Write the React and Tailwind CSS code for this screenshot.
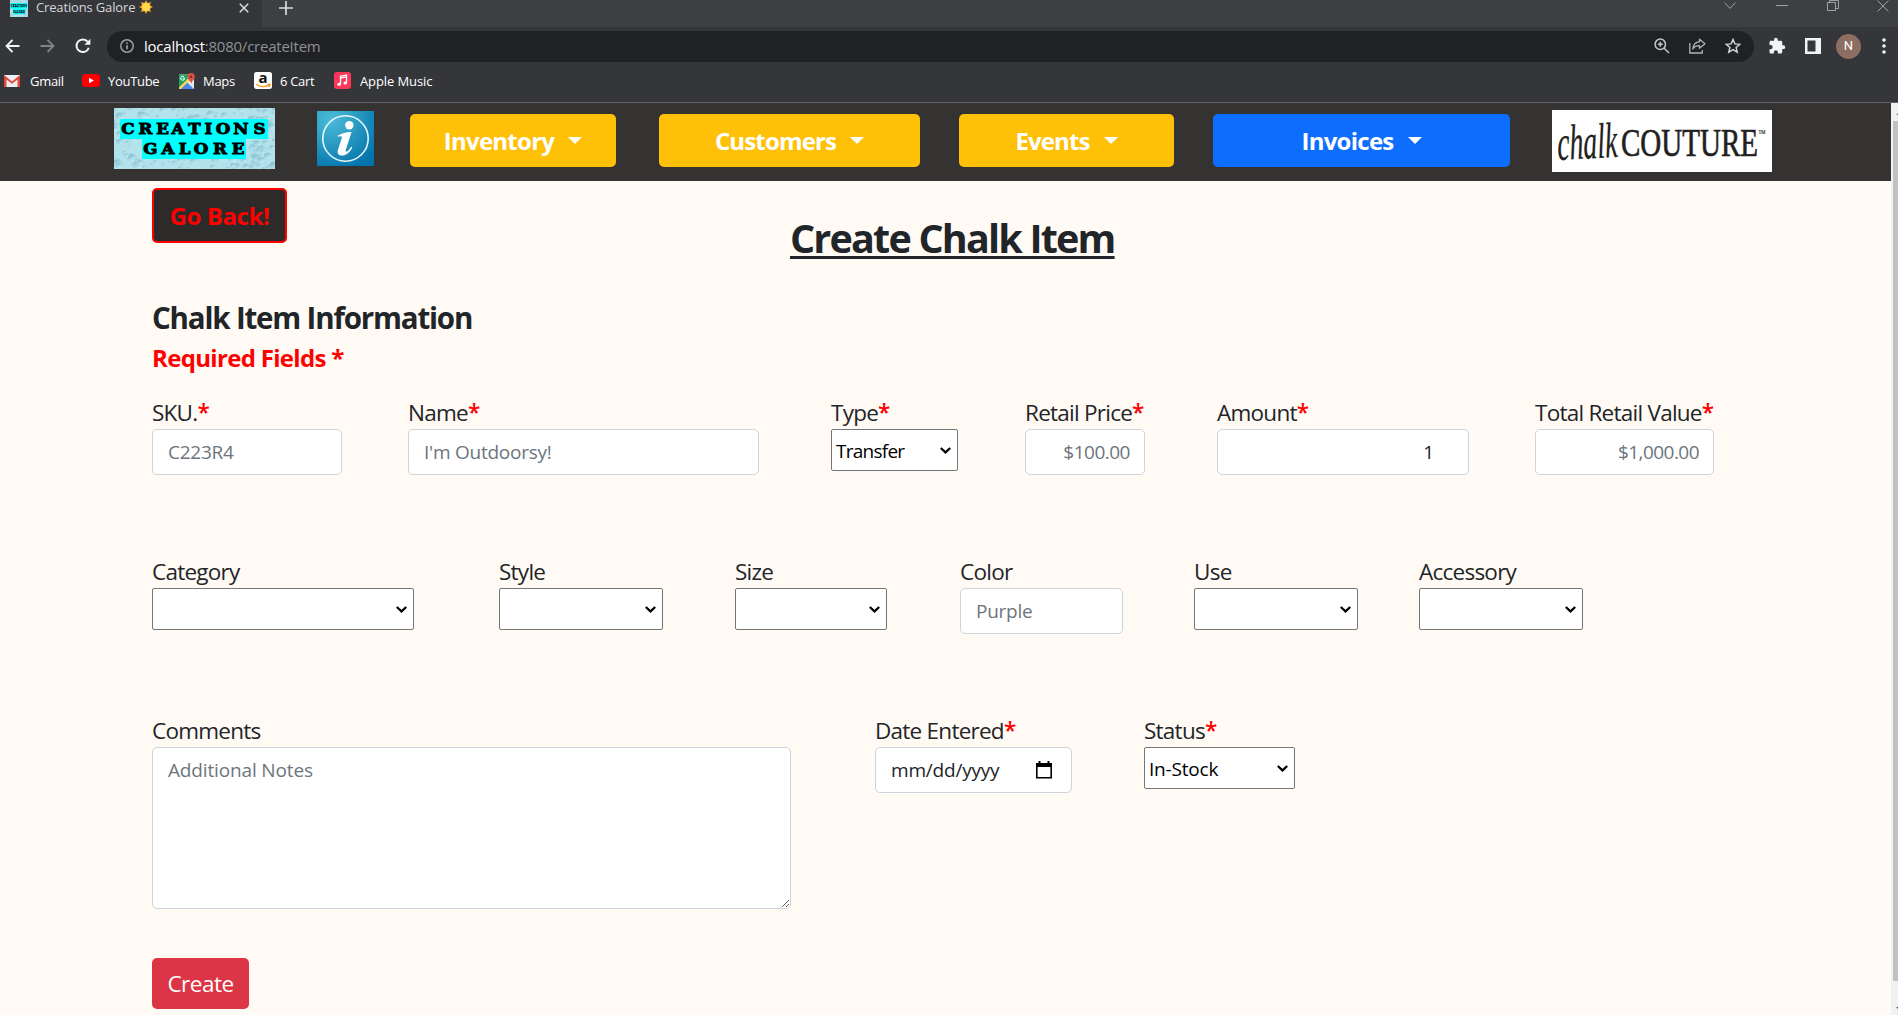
import React from "react";

/* ---------- browser chrome ---------- */

function BrandDrops({ idPrefix }) {
  const drops = [];
  let seed = 7;
  const rnd = () => {
    seed = (seed * 16807) % 2147483647;
    return seed / 2147483647;
  };
  for (let i = 0; i < 260; i++) {
    const r = 1 + rnd() * rnd() * 5.5;
    drops.push({ x: rnd() * 161, y: rnd() * 61, r });
  }
  return (
    <g>
      <defs>
        <linearGradient id={idPrefix + "d"} x1="0" y1="0" x2="0.6" y2="1">
          <stop offset="0" stopColor="#74b2c6" />
          <stop offset="1" stopColor="#caf0f6" />
        </linearGradient>
      </defs>
      <rect width="161" height="61" fill="#b2e2eb" />
      {drops.map((d, i) => (
        <ellipse key={i} cx={d.x} cy={d.y} rx={d.r} ry={d.r * 0.85} fill={"url(#" + idPrefix + "d)"} stroke="#a5d8e3" strokeWidth="0.5" />
      ))}
    </g>
  );
}

function Spread({ chars, x, y }) {
  return (
    <text x={x.map((v) => v / 1.15).join(" ")} y={y} textAnchor="middle">
      {chars}
    </text>
  );
}

function BrandLogo({ className, id }) {
  return (
    <svg viewBox="0 0 161 61" preserveAspectRatio="none" className={className}>
      <BrandDrops idPrefix={id} />
      <rect x="6" y="11" width="148" height="20" fill="#00ffff" />
      <rect x="28" y="31" width="104" height="20" fill="#00ffff" />
      <g transform="scale(1.15 1)" fontFamily="'DejaVu Serif', serif" fontWeight="700" fontSize="14.5" fill="#000" stroke="#000" strokeWidth="0.9">
        <Spread chars="CREATIONS" x={[14, 31.5, 48.5, 64, 80.5, 94.5, 109, 127, 145.5]} y={26} />
        <Spread chars="GALORE" x={[36.5, 54, 70.5, 87, 106, 124]} y={46} />
      </g>
    </svg>
  );
}

function TabStrip() {
  return (
    <div className="flex h-[27px] bg-[#3c4043]">
      <div className="flex w-[262px] items-start bg-[#35363a] pl-[10px]">
        <BrandLogo id="fav" className="h-[17px] w-[18px] shrink-0" />
        <span className="-mt-[2px] ml-[8px] w-[98px] text-[13px] leading-[19px] tracking-[-0.15px] whitespace-nowrap text-[#d5d7da]">Creations Galore</span>
        <svg viewBox="0 0 14 14" className="ml-[5px] h-[14px] w-[14px]">
          <path d="M7 0l1.500 2.900L11.900 2l-.8 3.400L14 7l-2.900 1.600.8 3.400-3.400-.9L7 14l-1.500-2.900-3.400.9.8-3.400L0 7l2.900-1.600L2.100 2l3.400.9z" fill="#f2a52e" />
          <circle cx="7" cy="7" r="4.200" fill="#ffd94a" />
        </svg>
        <svg viewBox="0 0 10 10" className="mt-[3px] ml-[86px] h-[10px] w-[10px]" stroke="#dadce0" strokeWidth="1.5">
          <path d="M.8.8l8.400 8.400M9.200.8L.8 9.200" />
        </svg>
      </div>
      <div className="flex flex-1 items-start rounded-bl-[8px] bg-[#3c4043]">
        <svg viewBox="0 0 14 14" className="mt-px ml-[17px] h-[14px] w-[14px]" stroke="#dadce0" strokeWidth="1.700">
          <path d="M7 0v14M0 7h14" />
        </svg>
        <div className="ml-auto flex items-start text-[#a0a3a5]">
          <svg viewBox="0 0 12 8" className="mt-[2px] mr-[40px] h-[8px] w-[12px]" fill="none" stroke="currentColor">
            <path d="M.6 .6L6 6.400l5.400-5.800" />
          </svg>
          <svg viewBox="0 0 12 2" className="mt-[4px] mr-[39px] h-[2px] w-[12px]" fill="currentColor">
            <path d="M0 1h12v1H0z" />
          </svg>
          <svg viewBox="0 0 12 12" className="mr-[38px] h-[12px] w-[12px]" fill="none" stroke="currentColor">
            <path d="M.5 2.500h8v8h-8zM2.500 2.500V.5h9v8H8.500" />
          </svg>
          <svg viewBox="0 0 12 12" className="mr-[9px] h-[12px] w-[12px]" stroke="currentColor">
            <path d="M.6.6l10.800 10.800M11.400.6L.6 11.400" />
          </svg>
        </div>
      </div>
    </div>
  );
}

function AddressBar() {
  return (
    <div className="flex h-[38px] items-center pl-[5px]">
      <svg viewBox="0 0 15 14" className="h-[14px] w-[15px]" fill="none" stroke="#f1f3f4" strokeWidth="1.800">
        <path d="M14.500 7H1.500M7.500 1L1.500 7l6 6" />
      </svg>
      <svg viewBox="0 0 15 14" className="ml-[20px] h-[14px] w-[15px]" fill="none" stroke="#808387" strokeWidth="1.800">
        <path d="M.5 7h13M7.500 1l6 6-6 6" />
      </svg>
      <svg viewBox="0 0 16 16" className="ml-[20px] h-[16px] w-[16px]" fill="none" stroke="#f1f3f4" strokeWidth="2">
        <path d="M13.800 9.700A6.300 6.300 0 1 1 12.800 3.900" />
        <path d="M15.400 .8v6H9.400z" fill="#f1f3f4" stroke="none" />
      </svg>
      <div className="ml-[16px] flex h-[31px] w-[1647px] items-center rounded-full bg-[#202124] pl-[13px]">
        <svg viewBox="0 0 14 14" className="h-[14px] w-[14px]" fill="none" stroke="#9aa0a6" strokeWidth="1.500">
          <circle cx="7" cy="7" r="6.200" />
          <path d="M7 6.200v4M7 3.500v1.500" strokeWidth="1.700" />
        </svg>
        <span className="ml-[10px] text-[15px] leading-[20px] tracking-[-0.23px] text-[#8d9196]">
          <span className="text-white">localhost</span>:8080/createItem
        </span>
        <div className="ml-auto flex items-center pr-[12px]">
          <svg viewBox="0 0 16 16" className="mr-[19px] h-[16px] w-[16px]" fill="none" stroke="#c4c7c9" strokeWidth="1.500">
            <circle cx="6.300" cy="6.300" r="5.200" />
            <path d="M10.200 10.200l4.800 4.800M3.800 6.300h5M6.300 3.800v5" />
          </svg>
          <svg viewBox="0 0 17 16" className="mr-[19px] h-[16px] w-[17px]" fill="none" stroke="#b0b3b6" strokeWidth="1.300">
            <path d="M.8 5v10h12.500v-3" />
            <path d="M10.500 1.200l5.500 4.500-5.500 4.500V7.700C7 7.700 5 9 3.800 11 4.300 7 6.500 4.200 10.500 3.700z" strokeLinejoin="round" />
          </svg>
          <svg viewBox="0 0 16 16" className="mr-px h-[16px] w-[16px]" fill="none" stroke="#d0d2d4" strokeWidth="1.500">
            <path d="M8 1.500l1.900 4.400 4.900.4-3.700 3.200 1.100 4.700L8 11.700l-4.200 2.500 1.100-4.700L1.200 6.300l4.900-.4z" />
          </svg>
        </div>
      </div>
      <svg viewBox="0 0 24 24" className="ml-[14px] h-[18px] w-[18px]" fill="#f1f3f4">
        <path d="M20.500 11H19V7c0-1.100-.9-2-2-2h-4V3.500a2.500 2.500 0 0 0-5 0V5H4c-1.100 0-2 .9-2 2v3.800h1.500c1.500 0 2.700 1.200 2.700 2.700S5 16.200 3.500 16.200H2V20c0 1.100.9 2 2 2h3.800v-1.500c0-1.500 1.200-2.700 2.700-2.700s2.700 1.200 2.700 2.700V22H17c1.100 0 2-.9 2-2v-4h1.500a2.500 2.500 0 0 0 0-5z" />
      </svg>
      <svg viewBox="0 0 16 16" className="ml-[19px] h-[16px] w-[16px]">
        <path d="M0 0h16v16H0z" fill="#f1f3f4" />
        <path d="M2.500 2.500h8v11h-8z" fill="#35363a" />
      </svg>
      <div className="ml-[15px] flex h-[25px] w-[25px] items-center justify-center rounded-full bg-[#8d6e63] font-['Roboto',sans-serif] text-[13px] text-white">N</div>
      <svg viewBox="0 0 4 16" className="ml-[21px] h-[16px] w-[4px]" fill="#f1f3f4">
        <circle cx="2" cy="2" r="1.800" />
        <circle cx="2" cy="8" r="1.800" />
        <circle cx="2" cy="14" r="1.800" />
      </svg>
    </div>
  );
}

function Bookmarks() {
  return (
    <div className="flex h-[31px] items-center pl-[4px] text-[13px] leading-[18px] whitespace-nowrap text-white">
      <svg viewBox="0 0 16 12" className="h-[12px] w-[16px]">
        <path d="M0 0h16v12H0z" fill="#eceff1" />
        <path d="M0 12V0l8 6.500L16 0v12h-2.500V4.500L8 8.800 2.500 4.500V12z" fill="#e0483c" />
      </svg>
      <span className="ml-[10px] w-[34px] tracking-[-0.3px]">Gmail</span>
      <svg viewBox="0 0 18 13" className="ml-[18px] h-[13px] w-[18px]">
        <rect width="18" height="13" rx="3.500" fill="#f00" />
        <path d="M7 3.700l5 2.800-5 2.800z" fill="#fff" />
      </svg>
      <span className="ml-[8px] w-[52px] tracking-[-0.3px]">YouTube</span>
      <svg viewBox="0 0 16 16" className="ml-[19px] h-[16px] w-[16px]">
        <path d="M0 1.500h15v14.500H0z" fill="#e8eaed" />
        <path d="M0 1.500h10L8.500 7 0 15z" fill="#1fa463" />
        <path d="M7.500 8.700L15 16H.5z" fill="#4a89f3" />
        <path d="M0 14.500L9.500 5l1.700 1.800L2 16H0z" fill="#ffd54b" />
        <path d="M12 0a3.800 3.800 0 0 1 3.800 3.800c0 2.600-2.700 3.500-3.500 7-.8-3.500-4-4.400-4-7A3.800 3.800 0 0 1 12 0z" fill="#de5145" />
        <circle cx="12" cy="3.800" r="1.300" fill="#802b27" />
        <path d="M5.800 5.200H3.700M5.700 5.400A2 2 0 1 1 5 3.700" fill="none" stroke="#fff" strokeWidth="1" />
      </svg>
      <span className="ml-[8px] w-[33px] tracking-[-0.3px]">Maps</span>
      <svg viewBox="0 0 18 17" className="ml-[18px] h-[17px] w-[18px]">
        <rect width="18" height="17" rx="2.500" fill="#fff" />
        <text x="9" y="11" textAnchor="middle" fontFamily="'Open Sans', sans-serif" fontWeight="700" fontSize="15" fill="#111">a</text>
        <path d="M2 12.300c4 3 9.500 3 13 .8M13.500 12.200l2.500.2-.8 2.400" fill="none" stroke="#f79a1f" strokeWidth="1.400" />
      </svg>
      <span className="ml-[8px] w-[37px] tracking-[-0.3px]">6 Cart</span>
      <svg viewBox="0 0 17 17" className="ml-[17px] h-[17px] w-[17px]">
        <rect width="17" height="17" rx="3" fill="#f9385a" />
        <path d="M6.500 12V4.200l6-1.200v7.800M6.500 6l6-1.200" fill="none" stroke="#fff" strokeWidth="1.300" />
        <ellipse cx="5.200" cy="12.200" rx="1.800" ry="1.500" fill="#fff" />
        <ellipse cx="11.200" cy="11" rx="1.800" ry="1.500" fill="#fff" />
      </svg>
      <span className="ml-[9px] tracking-[-0.1px]">Apple Music</span>
    </div>
  );
}

/* ---------- site header ---------- */

function Caret() {
  return <span className="ml-[14px] h-0 w-0 border-x-[7.5px] border-t-[7.5px] border-x-transparent border-t-white" />;
}

function NavButton({ className, children }) {
  return (
    <button className={"flex h-[53px] shrink-0 items-center justify-center rounded-[5px] text-[24px] leading-[36px] font-bold text-white " + className}>
      {children}
      <Caret />
    </button>
  );
}

function InfoLogo() {
  return (
    <svg viewBox="0 0 57 55" className="mt-[8px] ml-[42px] h-[55px] w-[57px] shrink-0">
      <defs>
        <radialGradient id="info" cx="0.25" cy="0.15" r="0.95">
          <stop offset="0" stopColor="#4dbcd9" />
          <stop offset="0.450" stopColor="#2c9cc4" />
          <stop offset="1" stopColor="#0374ab" />
        </radialGradient>
      </defs>
      <rect width="57" height="55" fill="url(#info)" />
      <circle cx="28.500" cy="27.500" r="22.700" fill="none" stroke="#e6f6fb" strokeWidth="1.600" />
      <circle cx="32.300" cy="14.300" r="4.200" fill="#fff" />
      <path d="M20.500 24.800c4-2.600 8.500-3.700 14-3.900l-5.600 17.600c-.7 2.200.4 2.700 1.800 1.500 1.200-1 2.300-2.300 3.600-4.200l1 .7c-2.600 4.900-6.300 8.300-10.600 8.100-3.700-.2-4.700-2.800-3.700-5.900l3.800-11.700c.6-2-1.300-2.200-3.900-1.200z" fill="#fff" />
    </svg>
  );
}

function CoutureLogo() {
  return (
    <svg viewBox="0 0 220 62" className="mt-[7px] ml-[42px] h-[62px] w-[220px] shrink-0">
      <rect width="220" height="62" fill="#fff" />
      <g fill="#231f20" stroke="#231f20" fontFamily="'Liberation Serif', serif">
        <text x="6" y="50" fontSize="50" fontStyle="italic" strokeWidth="0.3" textLength="60" lengthAdjust="spacingAndGlyphs" transform="rotate(-3 6 50)">chalk</text>
        <text x="69" y="45.500" fontSize="39" strokeWidth="0.700" textLength="137" lengthAdjust="spacingAndGlyphs">COUTURE</text>
        <text x="206.500" y="24" fontSize="6" strokeWidth="0.200" textLength="7" lengthAdjust="spacingAndGlyphs">TM</text>
      </g>
    </svg>
  );
}

function SiteHeader() {
  return (
    <header className="flex h-[78px] items-start bg-[#353331] pl-[114px]">
      <BrandLogo id="brand" className="mt-[5px] h-[61px] w-[161px] shrink-0" />
      <InfoLogo />
      <NavButton className="mt-[11px] ml-[36px] w-[206px] bg-[#ffc107]">
        <span className="tracking-[-0.75px]">Inventory</span>
      </NavButton>
      <NavButton className="mt-[11px] ml-[43px] w-[261px] bg-[#ffc107]">
        <span className="tracking-[-0.85px]">Customers</span>
      </NavButton>
      <NavButton className="mt-[11px] ml-[39px] w-[215px] bg-[#ffc107]">
        <span className="tracking-[-0.9px]">Events</span>
      </NavButton>
      <NavButton className="mt-[11px] ml-[39px] w-[297px] bg-[#0d6efd]">
        <span className="tracking-[-0.75px]">Invoices</span>
      </NavButton>
      <CoutureLogo />
    </header>
  );
}

/* ---------- form ---------- */

function Field({ label, required, className, children }) {
  return (
    <div className={"flex shrink-0 flex-col " + className}>
      <label className="h-[34px] pt-px text-[22.5px] leading-[33px] tracking-[-0.75px] whitespace-nowrap text-[#212529]">
        {label}
        {required && <span className="font-semibold text-[#f00]">*</span>}
      </label>
      {children}
    </div>
  );
}

const inputBox = "w-full rounded-[5px] border border-[#ced4da] bg-white px-[15px] text-[19px] leading-[30px] text-[#212529] placeholder:text-[#6c757d] placeholder:opacity-100 ";

function Input({ className = "tracking-[-0.25px]", ...rest }) {
  return <input className={inputBox + "h-[46px] " + className} {...rest} />;
}

function Select({ value, textClass = "" }) {
  return (
    <div className="flex h-[42px] w-full items-center justify-between rounded-[2px] border border-[#767676] bg-white pr-[6px] pl-[4px] text-[19px] leading-[30px] text-black">
      <span className={"pt-[2px] " + textClass}>{value}</span>
      <svg viewBox="0 0 11 7" className="h-[7px] w-[11px]" fill="none" stroke="#000" strokeWidth="2.200">
        <path d="M.8 1l4.700 4.400L10.200 1" />
      </svg>
    </div>
  );
}

function DateInput() {
  return (
    <div className={inputBox + "flex h-[46px] items-center justify-between"}>
      <span className="tracking-[-0.2px]">mm/dd/yyyy</span>
      <svg viewBox="0 0 16 18" className="mr-[4px] h-[18px] w-[16px]">
        <path d="M.8 3.500h14.400v13.300H.8z" fill="none" stroke="#000" strokeWidth="1.600" />
        <path d="M0 2h16v4H0zM2.500 0h2v3h-2zM11.500 0h2v3h-2z" />
      </svg>
    </div>
  );
}

function ItemForm() {
  return (
    <main className="flex-1 bg-[#fffaf4] pl-[152px]">
      <div className="flex h-[117px] items-start pt-[7px]">
        <button className="flex h-[55px] w-[135px] shrink-0 items-center justify-center rounded-[5px] border-2 border-[#f00] bg-[#2d2b29] text-[24px] leading-[36px] font-bold tracking-[-0.4px] whitespace-nowrap text-[#f00]">
          Go Back!
        </button>
        <h1 className="mt-[22px] ml-[503px] text-[39.5px] leading-[56px] font-bold tracking-[-1.8px] whitespace-nowrap text-[#212529] underline decoration-[3px] underline-offset-[3px]">Create Chalk Item</h1>
      </div>
      <h2 className="h-[40px] text-[29.5px] leading-[40px] font-bold tracking-[-1.18px] text-[#212529]">Chalk Item Information</h2>
      <p className="h-[42px] text-[24px] leading-[40px] font-bold tracking-[-0.68px] text-[#f00]">Required Fields *</p>

      <div className="mt-[15px] flex h-[159px]">
        <Field label="SKU." required className="w-[190px]">
          <Input placeholder="C223R4" />
        </Field>
        <Field label="Name" required className="ml-[66px] w-[351px]">
          <Input placeholder="I'm Outdoorsy!" />
        </Field>
        <Field label="Type" required className="ml-[72px] w-[127px]">
          <Select value="Transfer" textClass="tracking-[-0.75px]" />
        </Field>
        <Field label="Retail Price" required className="ml-[67px] w-[120px]">
          <Input placeholder="$100.00" className="pr-[14px]! text-right tracking-[-0.5px]" />
        </Field>
        <Field label="Amount" required className="ml-[72px] w-[252px]">
          <Input defaultValue="1" className="pr-[34px]! text-right" />
        </Field>
        <Field label="Total Retail Value" required className="ml-[66px] w-[179px]">
          <Input placeholder="$1,000.00" className="pr-[14px]! text-right tracking-[-0.55px]" />
        </Field>
      </div>

      <div className="flex h-[159px]">
        <Field label="Category" className="w-[262px]">
          <Select />
        </Field>
        <Field label="Style" className="ml-[85px] w-[164px]">
          <Select />
        </Field>
        <Field label="Size" className="ml-[72px] w-[152px]">
          <Select />
        </Field>
        <Field label="Color" className="ml-[73px] w-[163px]">
          <Input placeholder="Purple" />
        </Field>
        <Field label="Use" className="ml-[71px] w-[164px]">
          <Select />
        </Field>
        <Field label="Accessory" className="ml-[61px] w-[164px]">
          <Select />
        </Field>
      </div>

      <div className="flex h-[245px]">
        <Field label="Comments" className="w-[639px]">
          <textarea placeholder="Additional Notes" className={inputBox + "h-[162px] resize py-[7px] tracking-[-0.15px]"} />
        </Field>
        <Field label="Date Entered" required className="ml-[84px] w-[197px]">
          <DateInput />
        </Field>
        <Field label="Status" required className="ml-[72px] w-[151px]">
          <Select value="In-Stock" textClass="tracking-[-0.2px]" />
        </Field>
      </div>

      <button className="h-[51px] w-[97px] rounded-[5px] bg-[#dc3545] text-[22.5px] leading-[36px] tracking-[-0.5px] text-white">Create</button>
    </main>
  );
}

function Scrollbar() {
  return (
    <div className="flex w-[7px] shrink-0 flex-col overflow-hidden bg-[#f1f1f1] pl-[2px]">
      <svg viewBox="0 0 5 18" className="h-[18px] w-[5px]" fill="#8a8a8a">
        <path d="M3 12L7 8v4z" />
      </svg>
      <div className="h-[860px] bg-[#c1c1c1]" />
      <svg viewBox="0 0 5 34" className="h-[34px] w-[5px]" fill="#505050">
        <path d="M3 26L7 30v-4z" />
      </svg>
    </div>
  );
}

export default function App() {
  return (
    <div className="flex h-[1015px] w-[1898px] flex-col overflow-hidden font-['Open_Sans',sans-serif]">
      <div className="h-[103px] shrink-0 border-b border-[#5f6164] bg-[#35363a]">
        <TabStrip />
        <AddressBar />
        <Bookmarks />
      </div>
      <div className="flex h-[912px]">
        <div className="flex flex-1 flex-col">
          <SiteHeader />
          <ItemForm />
        </div>
        <Scrollbar />
      </div>
    </div>
  );
}
